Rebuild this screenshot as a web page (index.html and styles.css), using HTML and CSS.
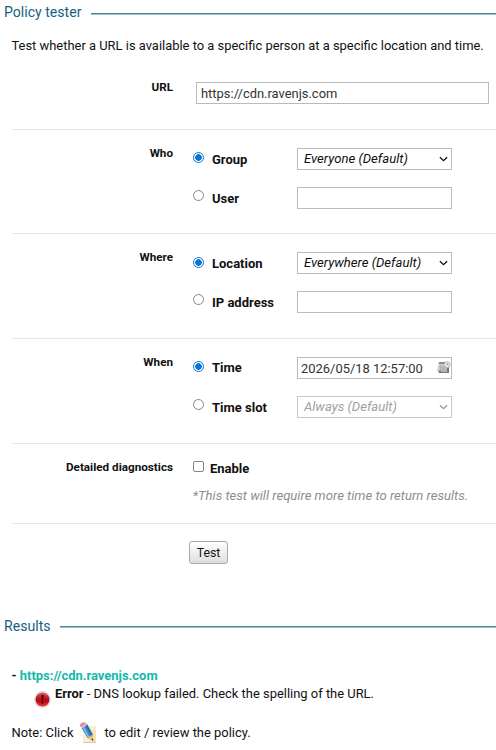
FILE: index.html
```html
<!DOCTYPE html>
<html lang="en">
<head>
<meta charset="utf-8">
<title>Policy tester</title>
<link rel="stylesheet" href="styles.css">
</head>
<body>
<main>
  <h2 class="heading heading-top"><span>Policy tester</span></h2>
  <p class="intro">Test whether a URL is available to a specific person at a specific location and time.</p>
  <form class="form">
    <section class="row row-url">
      <h3 class="row-label">URL</h3>
      <input class="field url" type="text" value="https://cdn.ravenjs.com" aria-label="URL">
    </section>
    <section class="row row-pair">
      <h3 class="row-label">Who</h3>
      <div class="options">
        <div class="option">
          <input class="radio" type="radio" name="who" id="group" checked><label for="group">Group</label>
          <div class="select"><select class="field" aria-label="Group"><option>Everyone (Default)</option></select><svg class="chevron" viewBox="0 0 10 6"><path d="M1 1l4 3.8L9 1"/></svg></div>
        </div>
        <div class="option">
          <input class="radio" type="radio" name="who" id="user"><label for="user">User</label>
          <input class="field" type="text" aria-label="User">
        </div>
      </div>
    </section>
    <section class="row row-pair row-where">
      <h3 class="row-label">Where</h3>
      <div class="options">
        <div class="option">
          <input class="radio" type="radio" name="where" id="location" checked><label for="location">Location</label>
          <div class="select"><select class="field" aria-label="Location"><option>Everywhere (Default)</option></select><svg class="chevron" viewBox="0 0 10 6"><path d="M1 1l4 3.8L9 1"/></svg></div>
        </div>
        <div class="option">
          <input class="radio" type="radio" name="where" id="ip"><label for="ip">IP address</label>
          <input class="field" type="text" aria-label="IP address">
        </div>
      </div>
    </section>
    <section class="row row-pair row-when">
      <h3 class="row-label">When</h3>
      <div class="options">
        <div class="option">
          <input class="radio" type="radio" name="when" id="time" checked><label for="time">Time</label>
          <div class="select"><input class="field date" type="text" value="2026/05/18 12:57:00" aria-label="Time">
            <svg class="calendar" viewBox="0 0 14 13">
              <path d="M2 1h8v9H0z" fill="#d2d2d2"/><path d="M2 1h8v2H1.6z" fill="#8b8b8b"/>
              <path d="M2 5h5M2 7h5M3.5 4v5M6 4v5" stroke="#aaa" stroke-width=".7"/>
              <path d="M1 9.5h5l6-4V12H2z" fill="#777"/><path d="M4.5 6h5.5v5H4z" fill="#b5b5b5"/>
              <circle cx="10.3" cy="3.6" r="3" fill="#eee" stroke="#aaa" stroke-width=".8"/><path d="M10.3 2v1.9h1.5" fill="none" stroke="#888" stroke-width=".8"/>
            </svg></div>
        </div>
        <div class="option">
          <input class="radio" type="radio" name="when" id="slot"><label for="slot">Time slot</label>
          <div class="select"><select class="field" aria-label="Time slot" disabled><option>Always (Default)</option></select><svg class="chevron off" viewBox="0 0 10 6"><path d="M1 1l4 3.8L9 1"/></svg></div>
        </div>
      </div>
    </section>
    <section class="row row-diag">
      <h3 class="row-label">Detailed diagnostics</h3>
      <div class="diag">
        <div class="enable"><input class="check" type="checkbox" id="enable"><label for="enable">Enable</label></div>
        <p class="hint">*This test will require more time to return results.</p>
      </div>
    </section>
    <button class="test" type="button">Test</button>
  </form>
  <h2 class="heading"><span>Results</span></h2>
  <div class="results">
    <p class="site">- <a>https://cdn.ravenjs.com</a></p>
    <div class="error">
      <svg class="error-icon" viewBox="0 0 17 17">
        <defs><linearGradient id="red" x1="0" y1="0" x2="0" y2="1"><stop offset="0" stop-color="#df5a62"/><stop offset=".45" stop-color="#b8111c"/><stop offset=".6" stop-color="#bd0812"/><stop offset="1" stop-color="#ee3434"/></linearGradient></defs>
        <circle cx="8.5" cy="8.5" r="8.2" fill="#c9c9c9"/><circle cx="8.5" cy="8.3" r="7.6" fill="#e9e6e6"/><circle cx="8.5" cy="8.5" r="6.9" fill="url(#red)"/>
        <path d="M7.5 4h2l-.4 5.4H7.9z" fill="#2a0406"/><circle cx="8.5" cy="11.4" r="1.05" fill="#2a0406"/>
      </svg>
      <p class="message"><b>Error</b> - DNS lookup failed. Check the spelling of the URL.</p>
    </div>
    <p class="note"><span>Note: Click</span>
      <svg class="pencil" viewBox="0 0 18 22">
        <path d="M4 4h13v16H4z" fill="#f7efcf"/><path d="M4 20.5h13" stroke="#cfcab8"/><path d="M14 8h3v12h-5z" fill="#f2e5b5"/>
        <path d="M2 5l6-3.5 6 11-.7 5-5-1.7z" fill="#428bca"/><path d="M3.8 4.2l6 11.5" stroke="#82bbe3" stroke-width="1.7"/><path d="M7.2 3l5.4 10" stroke="#245f96" stroke-width="1.3"/>
        <path d="M8.3 16l5.5-3.6.4 6.3z" fill="#e9bc83"/><path d="M12.2 17.6l1.8-1.1.3 2.6z" fill="#343b42"/>
        <path d="M1 3.8Q.5 2 3 .8t4 .6l.7 1.2L2.4 6z" fill="#ee8a8e"/><path d="M2.1 5.7l5.7-3.5" stroke="#d7dce2" stroke-width="1.3"/>
      </svg><span>to edit / review the policy.</span></p>
  </div>
</main>
</body>
</html>
```
FILE: styles.css
```css
* { box-sizing: border-box; }
body {
  margin: 0;
  background: #fff;
  color: #111;
  font: 12.93px/16px Roboto, "Liberation Sans", sans-serif;
  overflow: hidden;
}
h2, h3, p { margin: 0; }
.heading {
  display: flex;
  align-items: center;
  gap: 9.5px;
  height: 26px;
  padding-left: 4px;
  color: #17617f;
  font-size: 14.1px;
  font-weight: 400;
}
.heading::after {
  content: "";
  flex: 1;
  height: 2px;
  margin-top: 1px;
  background: linear-gradient(#4b879e 50%, #9bc0ce 50%);
}
.heading-top span { margin-top: -2px; }
.intro { padding: 12px 0 0 11.5px; height: 42px; white-space: nowrap; }
.form { margin-left: 11.5px; height: 545px; }
.row {
  display: grid;
  grid-template-columns: 161.5px 1fr;
  border-bottom: 1px solid #e6e6e6;
}
.row-label {
  padding-top: 15px;
  text-align: right;
  font-size: 11.7px;
  font-weight: 700;
}
.row-url { height: 62px; }
.row-url .row-label { padding-top: 11px; }
.row-pair { height: 104px; }
.row-where, .row-when { height: 105px; }
.row-diag { height: 80px; }
.field {
  display: block;
  width: 156px;
  height: 22px;
  border: 1px solid #bbb;
  border-radius: 0;
  padding: 0 4px;
  margin: 0;
  background: #fff;
  color: #333;
  font: 12.93px/20px Roboto, sans-serif;
  outline: 0;
}
.url { width: 293px; margin: 14px 0 0 23px; }
.options { padding: 18px 0 0 19px; display: flex; flex-direction: column; gap: 17px; }
.option { display: grid; grid-template-columns: 20px 84.5px 155.5px; height: 22px; }
.option .field { width: 155.5px; }
.option label, .enable label { font-size: 13px; font-weight: 700; line-height: 23px; }
.row-when .option:first-child label { line-height: 21px; }
.radio, .check {
  appearance: none;
  width: 11px;
  height: 11px;
  margin: 4px 0 0 1px;
  border: 1px solid #858585;
  background: #fff;
}
.radio { border-radius: 50%; }
.option:last-child .radio { margin-top: 3px; }
.radio:checked { border-color: #0875d7; background: radial-gradient(circle, #0875d7 3px, #fff 3.6px); }
.select { position: relative; }
select.field { appearance: none; color: #111; font-style: italic; font-size: 13.1px; padding-left: 6.5px; }
.date { padding-left: 3.5px; }
select.field:disabled { color: #a0a0a0; border-color: #c8c8c8; opacity: 1; }
.chevron { position: absolute; right: 4px; top: 8px; width: 9px; height: 6px; }
.chevron path { fill: none; stroke: #111; stroke-width: 1.5; }
.chevron.off path { stroke: #999; }
.calendar { position: absolute; right: 1px; top: 4px; width: 14px; height: 13px; }
.row-where .option:first-child .radio { margin-top: 5px; }
.row-where .options { padding-top: 18px; }
.diag { padding: 14px 0 0 19px; }
.enable { display: flex; height: 22px; gap: 6px; }
.enable label { line-height: 22px; }
.check { border-radius: 2px; margin-top: 3px; }
.hint { margin-top: 8px; padding-left: .5px; color: #8d8d8d; font-size: 13.1px; font-style: italic; }
.test {
  display: block;
  width: 39px;
  height: 23px;
  margin: 17px 0 0 177.5px;
  padding: 0;
  border: 1px solid #aaa;
  border-radius: 3px;
  background: linear-gradient(#fff, #dedede);
  color: #111;
  font: 12.3px/20px Roboto, sans-serif;
}
.results { padding: 29px 0 0 11.5px; }
.site { font-size: 12.95px; font-weight: 700; }
.site a { color: #14b8ae; }
.error { display: flex; padding-left: 22.5px; height: 37px; }
.error-icon { width: 17px; height: 17px; margin: 7px 4px 0 0; }
.message { padding-top: 2px; }
.note { display: flex; height: 24px; line-height: 24px; }
.pencil { width: 18px; height: 22px; margin: 1px 8px 0 5px; }
```
